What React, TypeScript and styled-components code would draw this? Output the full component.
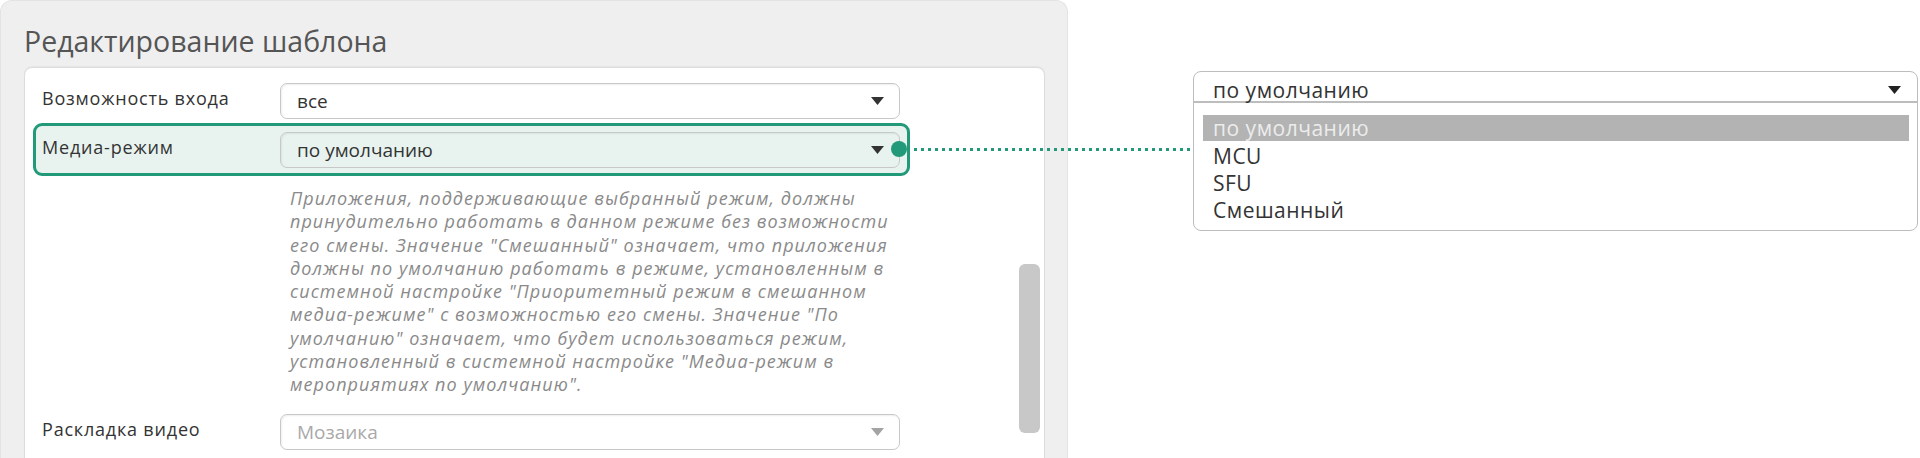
import React from 'react';
import styled, { createGlobalStyle, css } from 'styled-components';

const GlobalStyle = createGlobalStyle`
    html, body {
        margin: 0;
        padding: 0;
        background: #fff;
    }
    body {
        font-family: "Open Sans", "Noto Sans", sans-serif;
        color: #333;
    }
`;

const green = '#229a79';

const Page = styled.div`
    display: flex;
    align-items: flex-start;
    width: 1920px;
    height: 458px;
    overflow: hidden;
`;

const Editor = styled.section`
    flex-shrink: 0;
    width: 1068px;
    height: 500px;
    box-sizing: border-box;
    background: #efefef;
    border: 1px solid #e3e3e3;
    border-bottom: none;
    border-radius: 12px 12px 0 0;
    padding: 20px 22px 0 23px;
`;

const Title = styled.h1`
    margin: 0 0 6px;
    font-size: 28.5px;
    line-height: 40px;
    font-weight: 400;
    color: #555;
`;

const Card = styled.div`
    display: flex;
    height: 420px;
    background: #fff;
    border: 1px solid #dcdcdc;
    border-radius: 8px;
    box-shadow: 0 -1px 1px rgba(0, 0, 0, 0.04);
`;

const Fields = styled.div`
    flex: 1;
    display: flex;
    flex-direction: column;
    padding: 12px 0 0 8px;
`;

interface RowProps {
    $active?: boolean;
}

const Row = styled.div<RowProps>`
    position: relative;
    display: flex;
    align-items: center;
    width: 877px;
    box-sizing: border-box;
    border: 3px solid transparent;
    border-radius: 9px;
    padding: 0 7px 0 6px;
    margin-bottom: 1px;
    ${(p) => p.$active && css`
        border-color: ${green};
        background: #e8f3f0;
        padding: 6px 7px 5px 6px;
    `}
`;

const Label = styled.div`
    width: 238px;
    flex-shrink: 0;
    padding-bottom: 6px;
    font-size: 18px;
    letter-spacing: 0.8px;
    color: #333;
`;

interface SelectProps {
    $disabled?: boolean;
    $transparent?: boolean;
}

const Select = styled.div<SelectProps>`
    display: flex;
    align-items: center;
    justify-content: space-between;
    width: 620px;
    height: 36px;
    box-sizing: border-box;
    padding: 0 15px 0 16px;
    border: 1px solid #c8c8c8;
    border-radius: 7px;
    background: ${(p) => (p.$transparent ? 'transparent' : '#fff')};
    box-shadow: inset 1px 1px 2px rgba(0, 0, 0, 0.07);
    font-size: 19px;
    color: ${(p) => (p.$disabled ? '#a9a9a9' : '#333')};
`;

const Hint = styled.p`
    margin: 10px 0 15px 257px;
    font-size: 18px;
    letter-spacing: 1.05px;
    line-height: 23.25px;
    font-style: italic;
    color: #8a8a8a;
    white-space: nowrap;
`;

const ScrollTrack = styled.div`
    width: 21px;
    margin-right: 4px;
    padding-top: 196px;
    flex-shrink: 0;
`;

const ScrollThumb = styled.div`
    height: 169px;
    border-radius: 6px;
    background: #c8c8c8;
`;

const Dot = styled.span`
    position: absolute;
    left: 855px;
    top: 15px;
    width: 16px;
    height: 16px;
    border-radius: 50%;
    background: ${green};
`;

const Leader = styled.span`
    position: absolute;
    left: 871px;
    top: 22px;
    width: 286px;
    height: 3px;
    background: repeating-linear-gradient(to right, ${green} 0 3px, transparent 3px 7px);
`;

const Aside = styled.div`
    margin: 71px 0 0 125px;
`;

const Dropdown = styled.div`
    width: 725px;
    box-sizing: border-box;
    border: 1px solid #bdbdbd;
    border-radius: 8px;
    background: #fff;
    font-size: 21px;
    letter-spacing: 0.5px;
    color: #333;
`;

const DropHead = styled.div`
    display: flex;
    align-items: center;
    justify-content: space-between;
    height: 31px;
    box-sizing: border-box;
    padding: 6px 16px 0 19px;
    border-bottom: 2px solid #bdbdbd;
`;

const Options = styled.ul`
    list-style: none;
    margin: 0;
    padding: 12px 8px 7px 9px;
`;

const Option = styled.li<{ $selected?: boolean }>`
    height: 27px;
    line-height: 28px;
    padding-left: 10px;
    ${(p) => p.$selected && css`
        height: 26px;
        line-height: 27px;
        margin-bottom: 1px;
        background: #b3b3b3;
        color: #ececec;
    `}
`;

function Caret({ color = '#333' }: { color?: string }) {
    return (
        <svg width="13" height="8" viewBox="0 0 13 8">
            <polygon points="0,0 13,0 6.5,8" fill={color} />
        </svg>
    );
}

const hint = [
    'Приложения, поддерживающие выбранный режим, должны',
    'принудительно работать в данном режиме без возможности',
    'его смены. Значение "Смешанный" означает, что приложения',
    'должны по умолчанию работать в режиме, установленным в',
    'системной настройке "Приоритетный режим в смешанном',
    'медиа-режиме" с возможностью его смены. Значение "По',
    'умолчанию" означает, что будет использоваться режим,',
    'установленный в системной настройке "Медиа-режим в',
    'мероприятиях по умолчанию".',
];

const options = ['по умолчанию', 'MCU', 'SFU', 'Смешанный'];

export default function App() {
    return (
        <>
            <GlobalStyle />
            <Page>
                <Editor>
                    <Title>Редактирование шаблона</Title>
                    <Card>
                        <Fields>
                            <Row>
                                <Label>Возможность входа</Label>
                                <Select>
                                    <span>все</span>
                                    <Caret />
                                </Select>
                            </Row>
                            <Row $active>
                                <Label>Медиа-режим</Label>
                                <Select $transparent>
                                    <span>по умолчанию</span>
                                    <Caret />
                                </Select>
                                <Dot />
                                <Leader />
                            </Row>
                            <Hint>
                                {hint.map((line, i) => (
                                    <React.Fragment key={i}>
                                        {line}
                                        {i < hint.length - 1 && <br />}
                                    </React.Fragment>
                                ))}
                            </Hint>
                            <Row>
                                <Label>Раскладка видео</Label>
                                <Select $disabled>
                                    <span>Мозаика</span>
                                    <Caret color="#a3a3a3" />
                                </Select>
                            </Row>
                        </Fields>
                        <ScrollTrack>
                            <ScrollThumb />
                        </ScrollTrack>
                    </Card>
                </Editor>
                <Aside>
                    <Dropdown>
                        <DropHead>
                            <span>по умолчанию</span>
                            <Caret color="#222" />
                        </DropHead>
                        <Options>
                            {options.map((o, i) => (
                                <Option key={o} $selected={i === 0}>{o}</Option>
                            ))}
                        </Options>
                    </Dropdown>
                </Aside>
            </Page>
        </>
    );
}
